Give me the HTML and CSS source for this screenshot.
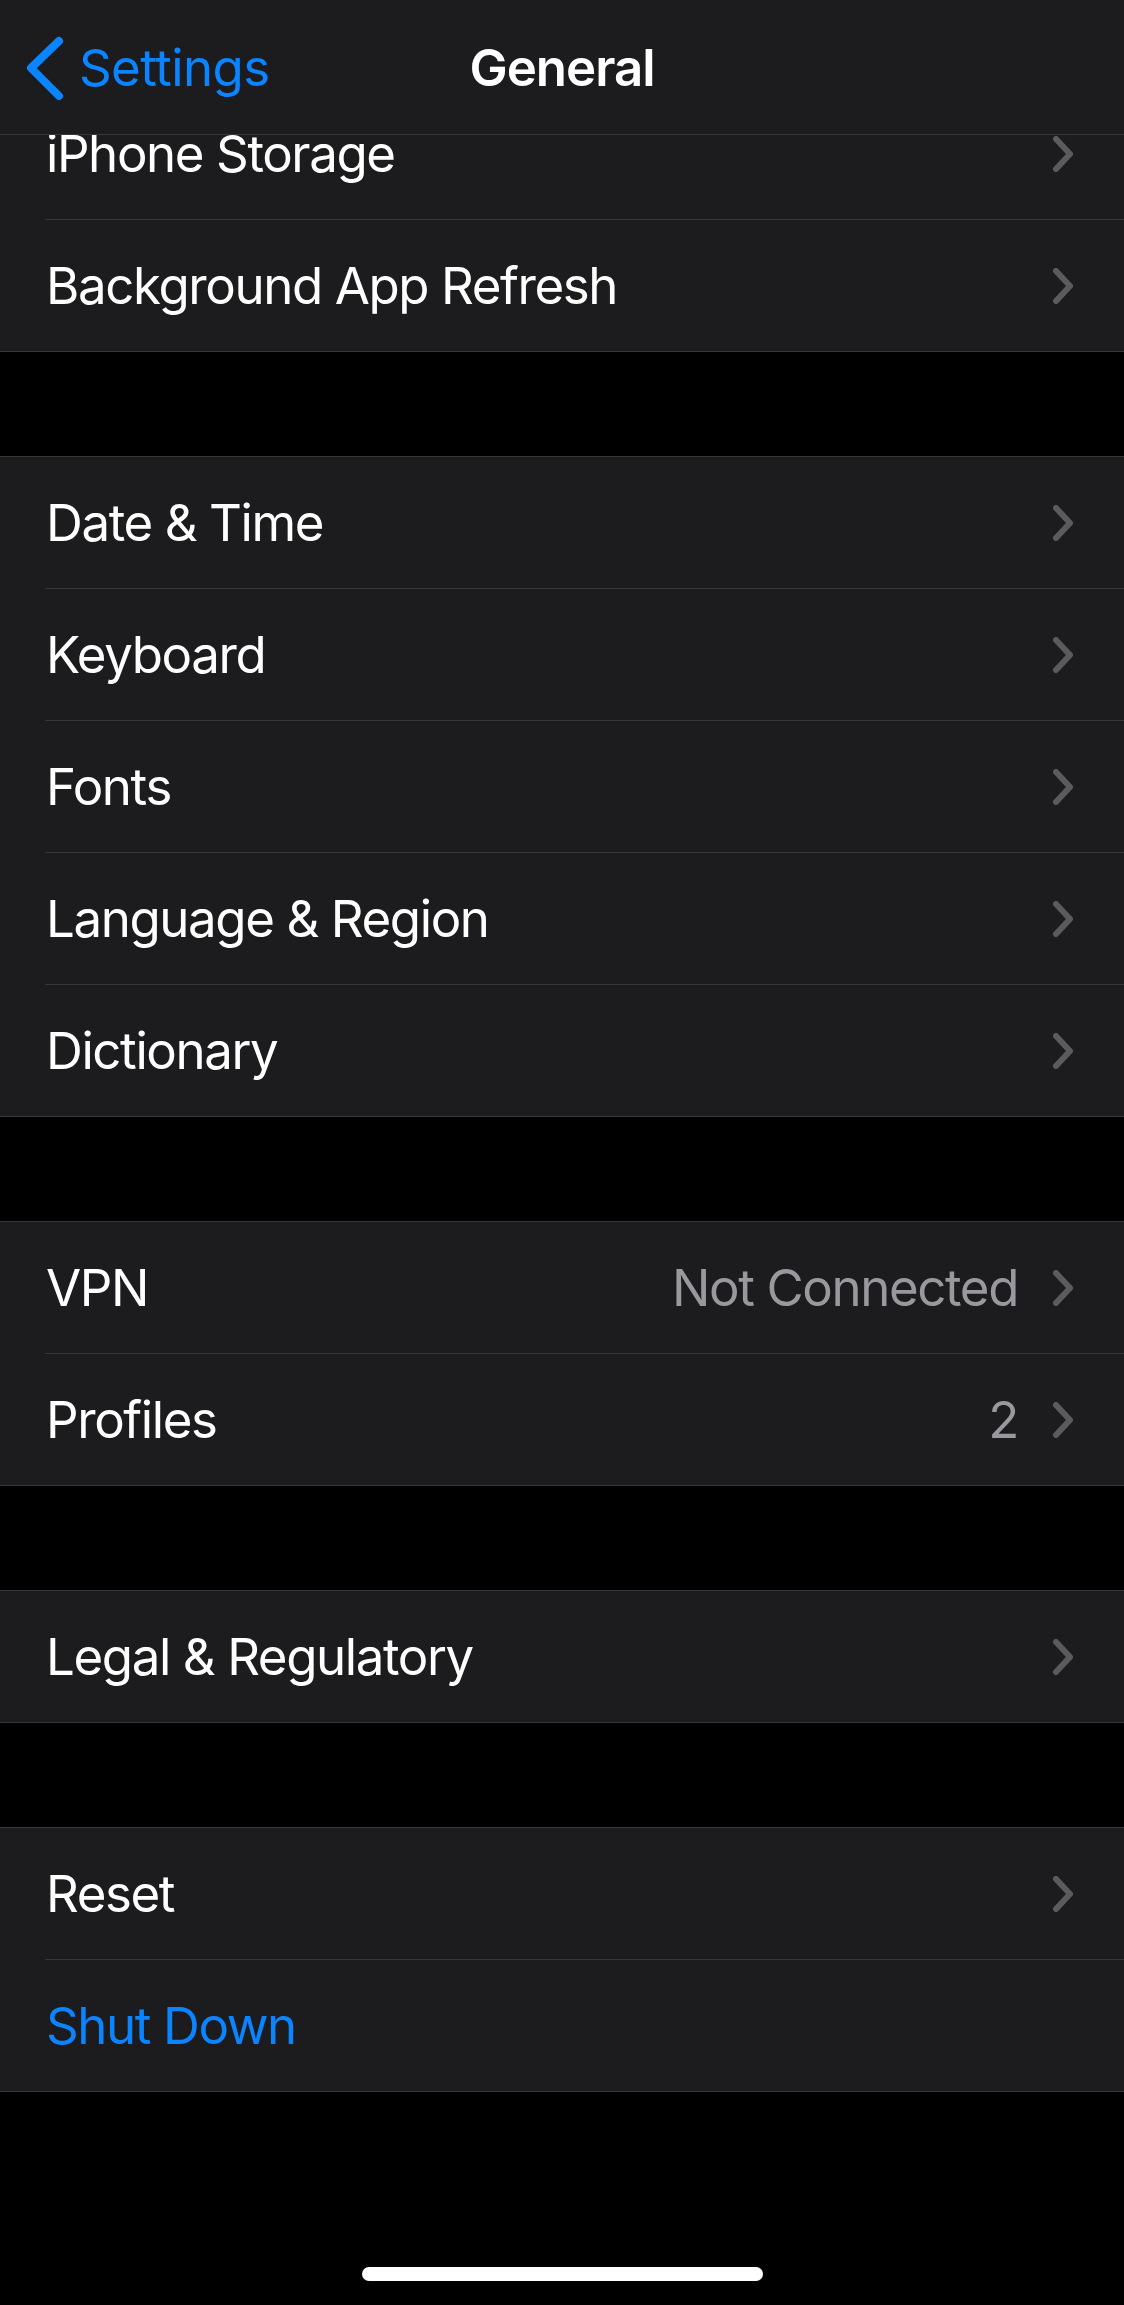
FILE: index.html
```html
<!DOCTYPE html>
<html lang="en">
<head>
    <meta charset="UTF-8">
    <meta name="viewport" content="width=device-width, initial-scale=1.0">
    <title>General</title>
    <link rel="stylesheet" href="styles.css">
</head>
<body>

<header class="nav">
    <a href="#" class="back">
        <svg class="back-icon" width="44" height="72" viewBox="0 0 44 72">
            <polyline points="37,10 9,37 37,65" />
        </svg>
        <span>Settings</span>
    </a>
    <h1 class="title">General</h1>
    <div></div>
</header>

<main class="list">
    <section class="group first">
        <div class="row"><div class="row-body"><span class="label">iPhone Storage</span><span class="chevron"></span></div></div>
        <div class="row"><div class="row-body"><span class="label">Background App Refresh</span><span class="chevron"></span></div></div>
    </section>

    <section class="group">
        <div class="row"><div class="row-body"><span class="label">Date &amp; Time</span><span class="chevron"></span></div></div>
        <div class="row"><div class="row-body"><span class="label">Keyboard</span><span class="chevron"></span></div></div>
        <div class="row"><div class="row-body"><span class="label">Fonts</span><span class="chevron"></span></div></div>
        <div class="row"><div class="row-body"><span class="label">Language &amp; Region</span><span class="chevron"></span></div></div>
        <div class="row"><div class="row-body"><span class="label">Dictionary</span><span class="chevron"></span></div></div>
    </section>

    <section class="group">
        <div class="row"><div class="row-body"><span class="label">VPN</span><span class="value">Not Connected</span><span class="chevron"></span></div></div>
        <div class="row"><div class="row-body"><span class="label">Profiles</span><span class="value">2</span><span class="chevron"></span></div></div>
    </section>

    <section class="group">
        <div class="row"><div class="row-body"><span class="label">Legal &amp; Regulatory</span><span class="chevron"></span></div></div>
    </section>

    <section class="group">
        <div class="row"><div class="row-body"><span class="label">Reset</span><span class="chevron"></span></div></div>
        <div class="row"><div class="row-body"><span class="label action">Shut Down</span></div></div>
    </section>
</main>

<div class="home-indicator"></div>

<script>
    // same chevron in every row
    document.querySelectorAll(".chevron").forEach(el => {
        el.innerHTML = '<svg width="22" height="36" viewBox="0 0 22 36"><polyline points="4,3 18,18 4,33" /></svg>';
    });
</script>

</body>
</html>
```

FILE: styles.css
```css
body {
    margin: 0;
    background-color: #000;
    color: #fff;
    font-family: Inter, "Noto Sans", sans-serif;
    font-size: 51px;
    letter-spacing: -1.4px;
}
.nav {
    position: relative;
    z-index: 1;
    height: 134px;
    background-color: #1c1c1e;
    border-bottom: 1px solid #38383a;
    display: grid;
    grid-template-columns: 1fr auto 1fr;
    align-items: center;
}
.back {
    display: flex;
    align-items: center;
    gap: 13px;
    padding-left: 22px;
    color: #0a84ff;
    text-decoration: none;
    letter-spacing: -0.6px;
}
.back-icon polyline {
    fill: none;
    stroke: #0a84ff;
    stroke-width: 8;
    stroke-linecap: round;
    stroke-linejoin: round;
}
.title {
    margin: 0;
    font-size: 51px;
    font-weight: 600;
    letter-spacing: -1px;
}
.list {
    margin-top: -47px;
}
.group {
    background-color: #1c1c1e;
    border-top: 1px solid #38383a;
    border-bottom: 1px solid #38383a;
    margin-bottom: 104px;
}
.group.first {
    border-top: none;
}
.group:last-child {
    margin-bottom: 0;
}
.row {
    padding-left: 45px;
}
.row-body {
    height: 131px;
    display: flex;
    align-items: center;
    padding-right: 50px;
    border-bottom: 1px solid #38383a;
}
.row:last-child .row-body {
    border-bottom: none;
}
.label {
    flex: 1;
    padding-left: 1px;
}
.label.action {
    color: #0a84ff;
}
.value {
    color: #98989f;
    margin-right: 34px;
}
.chevron svg {
    display: block;
}
.chevron polyline {
    fill: none;
    stroke: #5a5a5f;
    stroke-width: 6;
    stroke-linecap: round;
    stroke-linejoin: round;
}
.home-indicator {
    width: 401px;
    height: 14px;
    margin: 175px auto 24px;
    background-color: #fff;
    border-radius: 7px;
}
```
